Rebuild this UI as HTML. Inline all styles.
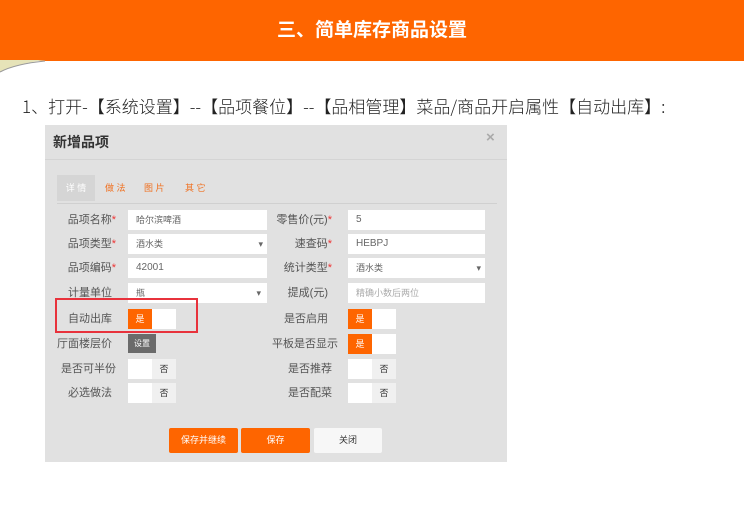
<!DOCTYPE html>
<html><head><meta charset="utf-8"><style>
*{margin:0;padding:0;box-sizing:border-box}
body{width:744px;height:513px;background:#fff;position:relative;overflow:hidden;font-family:"Liberation Sans","Noto Sans CJK SC",sans-serif}
.a{position:absolute}
.hdr{left:0;top:0;width:744px;height:61px;background:#fe6500;color:#fff;font-size:19px;font-weight:bold;text-align:center;line-height:61px}
.dlg{left:45px;top:125px;width:462px;height:337px;background:#e1e1e1}
.lbl{font-size:11px;color:#555;text-align:right;width:70px;line-height:20px}
.lbl b{color:#e33;font-weight:normal}
.in{background:#fff;height:20px;font-size:9px;color:#666;padding-left:8px;line-height:20px}
.tg{width:48px;height:20px;background:#fff;font-size:9px;line-height:20px}
.tg .o{position:absolute;left:0;top:0;width:24px;height:20px;background:#fe6500;color:#fff;text-align:center}
.tg .n{position:absolute;right:0;top:0;width:24px;height:20px;background:#f0f0f0;color:#333;text-align:center}
.btn{height:25px;font-size:9px;color:#fff;background:#fe6500;text-align:center;line-height:25px;border-radius:2px}
</style></head><body>
<div class="a hdr">三、简单库存商品设置</div>
<svg class="a" style="left:0;top:60px" width="50" height="16"><path d="M0 0 L45 0 Q15 4 0 12Z" fill="#e6e3b8"/><path d="M0 12 Q15 4 45 1" stroke="#999" fill="none"/></svg>
<div class="a" style="left:22px;top:93px;font-size:17px;color:#222;white-space:nowrap;font-family:'Noto Sans CJK SC',sans-serif;font-weight:300">1、打开-【系统设置】--【品项餐位】--【品相管理】菜品/商品开启属性【自动出库】:</div>
<div class="a dlg">
 <div class="a" style="left:8px;top:7px;font-size:14px;color:#333;font-weight:bold">新增品项</div>
 <div class="a" style="left:441px;top:4px;font-size:15px;color:#aaa;font-weight:bold">×</div>
 <div class="a" style="left:0;top:34px;width:462px;height:1px;background:#d4d4d4"></div>
 <div class="a" style="left:12px;top:50px;width:38px;height:26px;background:#d5d5d5;color:#fff;font-size:9px;line-height:26px;text-align:center">详 情</div>
 <div class="a" style="left:60px;top:50px;font-size:9px;color:#f07020;line-height:26px">做 法</div>
 <div class="a" style="left:99px;top:50px;font-size:9px;color:#f07020;line-height:26px">图 片</div>
 <div class="a" style="left:140px;top:50px;font-size:9px;color:#f07020;line-height:26px">其 它</div>
 <div class="a" style="left:12px;top:78px;width:440px;height:1px;background:#d0d0d0"></div>
</div>
<div class="a lbl" style="left:46px;top:210px">品项名称<b>*</b></div>
<div class="a in" style="left:128px;top:210px;width:139px">哈尔滨啤酒</div>
<div class="a lbl" style="left:262px;top:210px">零售价(元)<b>*</b></div>
<div class="a in" style="left:348px;top:210px;width:137px;font-size:10px">5</div>
<div class="a lbl" style="left:46px;top:234px">品项类型<b>*</b></div>
<div class="a in" style="left:128px;top:234px;width:139px">酒水类<span style="float:right;margin-right:4px">▾</span></div>
<div class="a lbl" style="left:262px;top:234px">速查码<b>*</b></div>
<div class="a in" style="left:348px;top:234px;width:137px;font-size:10px">HEBPJ</div>
<div class="a lbl" style="left:46px;top:258px">品项编码<b>*</b></div>
<div class="a in" style="left:128px;top:258px;width:139px;font-size:10px">42001</div>
<div class="a lbl" style="left:262px;top:258px">统计类型<b>*</b></div>
<div class="a in" style="left:348px;top:258px;width:137px">酒水类<span style="float:right;margin-right:4px">▾</span></div>
<div class="a lbl" style="left:42px;top:283px">计量单位</div>
<div class="a in" style="left:128px;top:283px;width:139px">瓶<span style="float:right;margin-right:6px">▾</span></div>
<div class="a lbl" style="left:258px;top:283px">提成(元)</div>
<div class="a in" style="left:348px;top:283px;width:137px;color:#aaa">精确小数后两位</div>

<div class="a lbl" style="left:42px;top:309px">自动出库</div>
<div class="a tg" style="left:128px;top:309px"><div class="o">是</div></div>
<div class="a lbl" style="left:258px;top:309px">是否启用</div>
<div class="a tg" style="left:348px;top:309px"><div class="o">是</div></div>
<div class="a lbl" style="left:42px;top:334px">厅面楼层价</div>
<div class="a" style="left:128px;top:334px;width:28px;height:19px;background:#6b6b6b;color:#fff;font-size:8px;line-height:19px;text-align:center">设置</div>
<div class="a lbl" style="left:268px;top:334px">平板是否显示</div>
<div class="a tg" style="left:348px;top:334px"><div class="o">是</div></div>
<div class="a lbl" style="left:46px;top:359px">是否可半份</div>
<div class="a tg" style="left:128px;top:359px"><div class="n">否</div></div>
<div class="a lbl" style="left:262px;top:359px">是否推荐</div>
<div class="a tg" style="left:348px;top:359px"><div class="n">否</div></div>
<div class="a lbl" style="left:42px;top:383px">必选做法</div>
<div class="a tg" style="left:128px;top:383px"><div class="n">否</div></div>
<div class="a lbl" style="left:262px;top:383px">是否配菜</div>
<div class="a tg" style="left:348px;top:383px"><div class="n">否</div></div>

<div class="a" style="left:55px;top:298px;width:143px;height:35px;border:2px solid #e8323c"></div>

<div class="a btn" style="left:169px;top:428px;width:69px">保存并继续</div>
<div class="a btn" style="left:241px;top:428px;width:69px">保存</div>
<div class="a btn" style="left:314px;top:428px;width:68px;background:#f7f7f7;color:#333">关闭</div>
</body></html>
